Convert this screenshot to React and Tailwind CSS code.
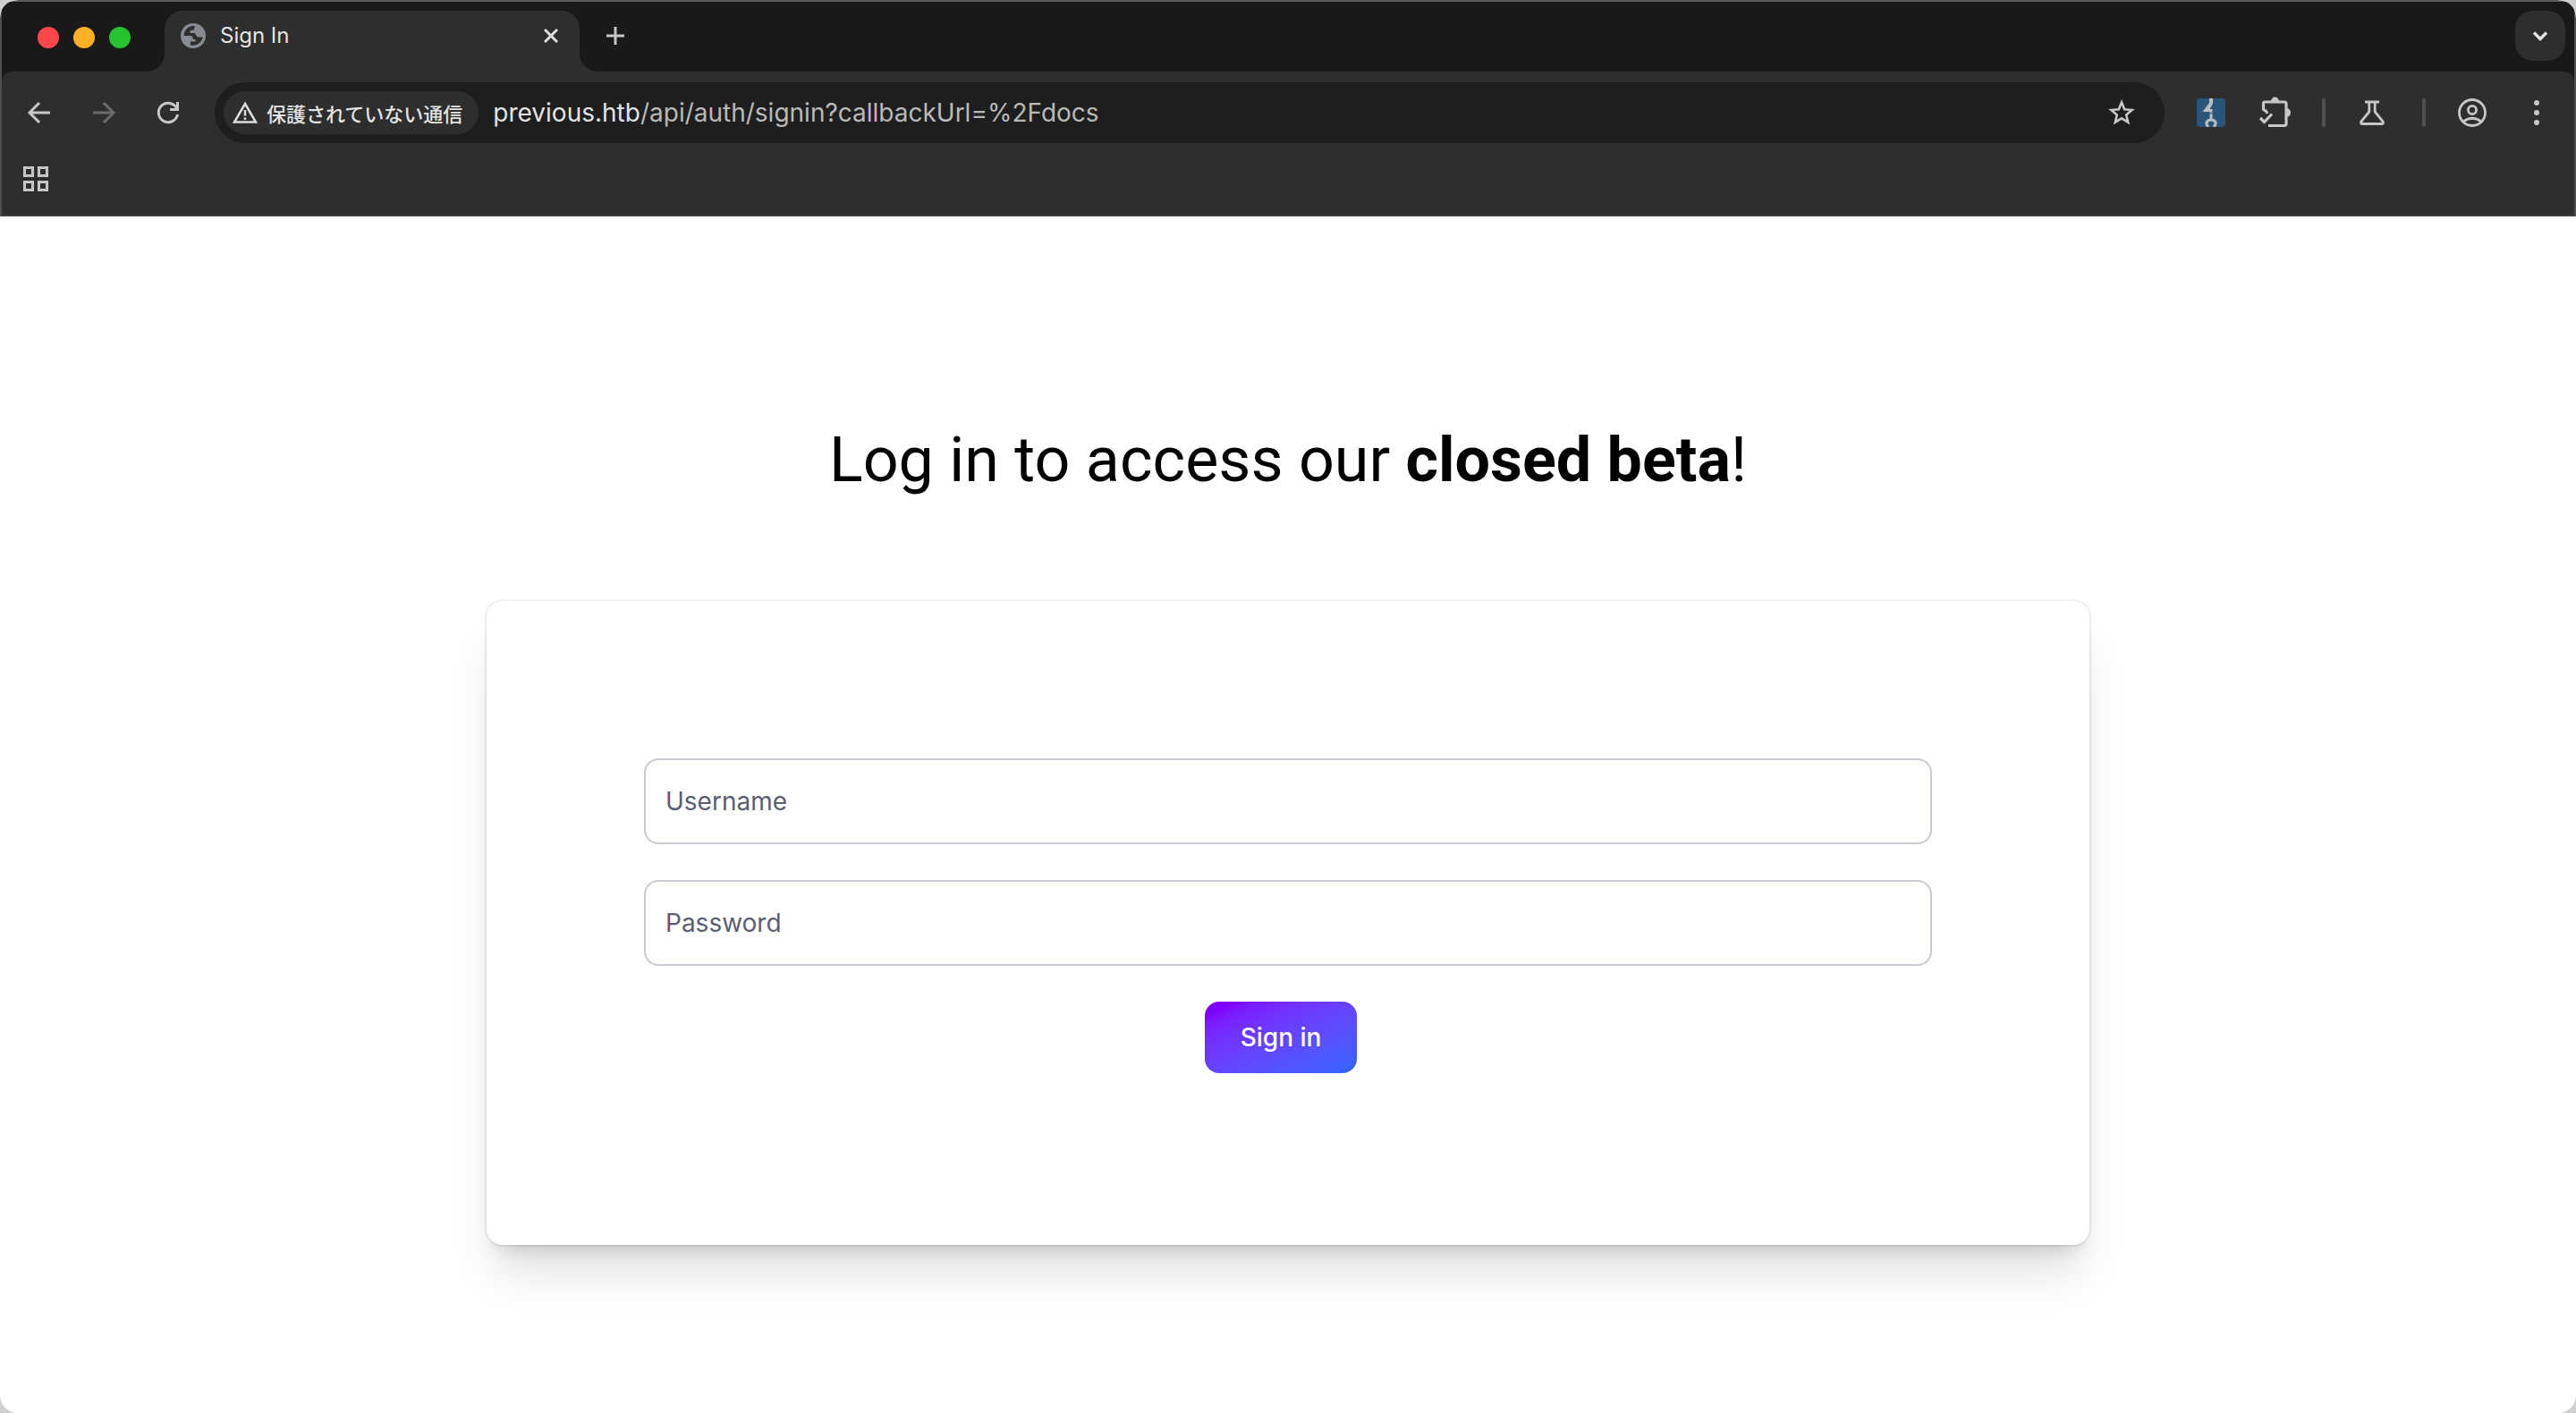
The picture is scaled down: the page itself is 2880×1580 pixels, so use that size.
import React from "react";

function Icon({ className, viewBox, children }) {
  return (
    <svg className={className} viewBox={viewBox} fill="none" aria-hidden="true">
      {children}
    </svg>
  );
}

function TabStrip() {
  return (
    <div className="flex h-[78px] items-start bg-[#191919] pt-2.5 pr-2.5 pl-3">
      <div className="flex h-[60px] w-[150px] shrink-0 items-center gap-4 pl-7">
        <button aria-label="Close window" className="size-6 rounded-full bg-[#ff4648]" />
        <button aria-label="Minimize window" className="size-6 rounded-full bg-[#ffb025]" />
        <button aria-label="Zoom window" className="size-6 rounded-full bg-[#27c231]" />
      </div>
      <Icon className="mt-12 size-5 shrink-0" viewBox="0 0 20 20">
        <path d="M0 20A20 20 0 0 0 20 0V20Z" fill="#2e2e2e" />
      </Icon>
      <div
        role="tab"
        aria-selected="true"
        className="flex h-[68px] w-[464px] shrink-0 items-start rounded-t-[20px] bg-[#2e2e2e] pr-5 pl-[18px]"
      >
        <div className="flex h-14 w-full items-center">
          <Icon className="size-7" viewBox="0 0 28 28">
            <circle cx="14" cy="14" r="14" fill="#868b93" />
            <path
              d="M16 3.2C10 2.200 5 6 3.6 12.500C3.500 14 4.500 14 6 14H11.500C13.500 14.200 13 17 14.500 18H16.500V20.500H11V24.500C17.500 26 23.500 21.500 24.800 15.500H19.500C17.500 15.500 17.500 12 15.500 11H10.800C9.500 8.500 11 7.800 14 7.800C15.500 7.600 15 5.800 16 3.200Z"
              fill="#2e2e2e"
            />
          </Icon>
          <span className="ml-4 text-2xl text-[#e3e3e3]">Sign In</span>
          <button aria-label="Close tab" className="ml-auto p-1">
            <Icon className="size-4" viewBox="0 0 16 16">
              <path d="M1 1 15 15M15 1 1 15" stroke="#dedede" strokeWidth="3" />
            </Icon>
          </button>
        </div>
      </div>
      <Icon className="mt-12 size-5 shrink-0" viewBox="0 0 20 20">
        <path d="M20 20A20 20 0 0 1 0 0V20Z" fill="#2e2e2e" />
      </Icon>
      <button aria-label="New tab" className="flex h-14 w-10 items-center justify-center">
        <Icon className="size-5" viewBox="0 0 20 20">
          <path d="M10 0V20M0 10H20" stroke="#c7c7c7" strokeWidth="3" />
        </Icon>
      </button>
      <button
        aria-label="Search tabs"
        className="ml-auto flex size-14 items-center justify-center rounded-[20px] bg-[#2e2e2e]"
      >
        <Icon className="size-5" viewBox="0 0 20 20">
          <path d="M3 6.500 10 13.500 17 6.500" stroke="#e3e3e3" strokeWidth="3.500" />
        </Icon>
      </button>
    </div>
  );
}

function AddressBar() {
  return (
    <div className="flex h-[68px] min-w-0 flex-1 items-center rounded-full bg-[#1e1e1e] pr-8 pl-2.5">
      <button className="flex h-12 shrink-0 items-center gap-2.5 rounded-full bg-[#2e2e2e] pr-[18px] pl-2.5">
        <Icon className="size-7" viewBox="0 0 28 28">
          <path d="M14 4 26 24.500H2Z" stroke="#dedede" strokeWidth="2.500" />
          <path d="M14 11V17.500M14 19.500V22" stroke="#dedede" strokeWidth="2.500" />
        </Icon>
        <span className="font-['Noto_Sans_CJK_JP',sans-serif] text-[22px] leading-8 font-medium text-[#e3e3e3]">
          保護されていない通信
        </span>
      </button>
      <div className="ml-4 truncate text-[28px] leading-10 text-[#b9b9b9]">
        <span className="text-[#e3e3e3]">previous.htb</span>/api/auth/signin?callbackUrl=%2Fdocs
      </div>
      <button aria-label="Bookmark this page" className="ml-auto">
        <Icon className="size-8" viewBox="0 0 32 32">
          <path
            d="M16 4.500 19.200 12.300 27.600 13 21.200 18.500 23.200 26.700 16 22.300 8.800 26.700 10.800 18.500 4.400 13 12.800 12.300Z"
            stroke="#c7c7c7"
            strokeWidth="2.600"
          />
        </Icon>
      </button>
    </div>
  );
}

function Toolbar() {
  return (
    <div className="flex h-[92px] items-center pr-[26px] pl-[26px]">
      <button aria-label="Back">
        <Icon className="size-8" viewBox="0 0 32 32">
          <path d="M28 16H6M16 5 5 16 16 27" stroke="#c7c7c7" strokeWidth="3" />
        </Icon>
      </button>
      <button aria-label="Forward" className="ml-10" disabled>
        <Icon className="size-8" viewBox="0 0 32 32">
          <path d="M4 16H26M16 5 27 16 16 27" stroke="#6b6b6b" strokeWidth="3" />
        </Icon>
      </button>
      <button aria-label="Reload" className="ml-10">
        <Icon className="size-8" viewBox="0 0 32 32">
          <path
            d="M26.500 18A10.700 10.700 0 1 1 23.500 8.300L26 11M26.500 4V12.500H18"
            stroke="#c7c7c7"
            strokeWidth="3"
          />
        </Icon>
      </button>
      <div className="flex min-w-0 flex-1 pl-9">
        <AddressBar />
      </div>
      <button aria-label="Burp Suite Navigation Recorder" className="ml-9 rounded bg-[#2b567c]">
        <Icon className="size-8" viewBox="0 0 32 32">
          <path d="M14 0H18V6L14.500 12H17.500V15H6.500L14 5Z" fill="#bdbdbd" />
          <path d="M14.500 15H17.500V24H14.500Z" fill="#bdbdbd" />
          <path d="M13 32C9.500 28.500 10.500 24 16 24S22.500 28.500 19 32" stroke="#bdbdbd" strokeWidth="3.200" />
          <circle cx="16" cy="16.500" r="1" fill="#2b567c" />
        </Icon>
      </button>
      <button aria-label="Extensions" className="ml-9">
        <Icon className="size-10" viewBox="0 0 40 40">
          <path
            d="M6.500 17.500V9.500Q6.500 8 8 8H30Q32 8 32 10V32.500Q32 34.500 30 34.500H12"
            stroke="#c7c7c7"
            strokeWidth="3.200"
          />
          <path d="M15 7.500A4.500 5 0 0 1 24 7.500ZM32.500 15A4.500 5 0 0 1 32.500 25Z" fill="#c7c7c7" />
          <path d="M6.500 17Q10.500 17.500 10.500 21" stroke="#c7c7c7" strokeWidth="3" />
          <path d="M3 26 7.500 30.500 16 21.500" stroke="#c7c7c7" strokeWidth="3.200" />
        </Icon>
      </button>
      <div className="ml-8 h-8 w-1 rounded-full bg-[#505050]" />
      <button aria-label="Experiments" className="ml-9">
        <Icon className="size-8" viewBox="0 0 32 32">
          <path
            d="M8 4H24M12.800 4V15L3.800 26Q2.800 28.500 5.500 28.500H26.500Q29.200 28.500 28.200 26L19.200 15V4"
            stroke="#c7c7c7"
            strokeWidth="2.800"
          />
        </Icon>
      </button>
      <div className="ml-10 h-8 w-1 rounded-full bg-[#505050]" />
      <button aria-label="Profile" className="ml-9">
        <Icon className="size-8" viewBox="0 0 32 32">
          <circle cx="16" cy="16" r="14.500" stroke="#c7c7c7" strokeWidth="2.800" />
          <circle cx="16" cy="13" r="4.600" stroke="#c7c7c7" strokeWidth="2.800" />
          <path d="M6 26Q16 18.500 26 26" stroke="#c7c7c7" strokeWidth="2.800" />
        </Icon>
      </button>
      <button aria-label="Menu" className="ml-10">
        <Icon className="size-8" viewBox="0 0 32 32">
          <circle cx="16" cy="5" r="3" fill="#c7c7c7" />
          <circle cx="16" cy="16" r="3" fill="#c7c7c7" />
          <circle cx="16" cy="27" r="3" fill="#c7c7c7" />
        </Icon>
      </button>
    </div>
  );
}

function BookmarksBar() {
  return (
    <div className="flex h-[70px] items-start border-b-2 border-[#3a3a3a] pt-3.5 pl-6">
      <button aria-label="Apps">
        <Icon className="size-7" viewBox="0 0 28 28">
          <path
            d="M1.500 1.500H10.500V10.500H1.500ZM17.500 1.500H26.500V10.500H17.500ZM1.500 17.500H10.500V26.500H1.500ZM17.500 17.500H26.500V26.500H17.500Z"
            stroke="#c7c7c7"
            strokeWidth="3"
          />
        </Icon>
      </button>
    </div>
  );
}

function Field({ id, label, type }) {
  return (
    <div className="grid items-center">
      <input
        id={id}
        name={id}
        type={type}
        placeholder=" "
        className="peer col-start-1 row-start-1 h-24 w-full rounded-2xl border-2 border-[#c8cad2] bg-white px-[22px] text-[28px] text-[#1f2937]"
      />
      <label
        htmlFor={id}
        className="invisible col-start-1 row-start-1 cursor-text justify-self-start px-6 text-[28px] leading-10 text-[#5b5d70] peer-placeholder-shown:visible"
      >
        {label}
      </label>
    </div>
  );
}

function SignInPage() {
  return (
    <main className="flex flex-1 flex-col items-center px-8 pt-[222px] pb-24">
      <h1 className="font-[Roboto,sans-serif] text-[70px] leading-[100px] text-black">
        Log in to access our <strong className="font-bold">closed beta</strong>!
      </h1>
      <form
        onSubmit={(e) => e.preventDefault()}
        className="mt-[108px] flex w-full max-w-[1792px] flex-col gap-10 rounded-[18px] bg-white px-44 pt-44 pb-48 shadow-[0_0_0_2px_rgba(17,24,39,0.07),0_40px_50px_-10px_rgba(0,0,0,0.12),0_16px_20px_-12px_rgba(0,0,0,0.15)]"
      >
        <Field id="username" label="Username" type="text" />
        <Field id="password" label="Password" type="password" />
        <div className="flex justify-center pr-4">
          <button
            type="submit"
            className="h-20 rounded-2xl bg-linear-to-br from-[#7f00ff] from-10% to-[#2b66ff] px-10 text-[28px] font-medium text-white"
          >
            Sign in
          </button>
        </div>
      </form>
    </main>
  );
}

export default function App() {
  return (
    <div className="bg-[#cfcfcf] font-[Inter,sans-serif]">
      <div className="flex min-h-screen flex-col overflow-hidden rounded-[20px] bg-white">
        <header className="rounded-t-[20px] border-x-2 border-t-2 border-x-[#4f4f4f] border-t-[#5c5c5c] bg-[#191919]">
          <TabStrip />
          <div className="rounded-t-xl bg-[#2e2e2e]">
            <Toolbar />
            <BookmarksBar />
          </div>
        </header>
        <SignInPage />
      </div>
    </div>
  );
}
